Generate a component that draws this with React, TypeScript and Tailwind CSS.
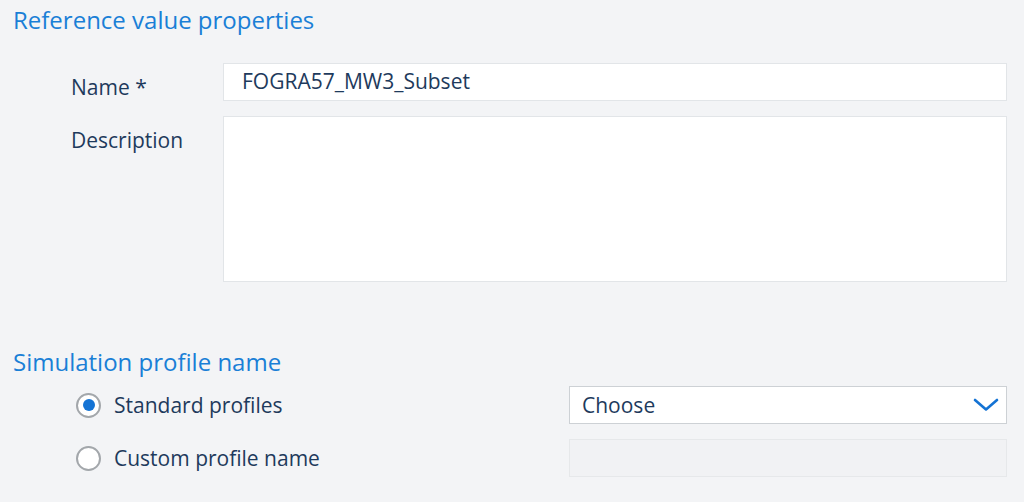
import React from 'react';

const labelColor = 'text-[#1e3a5c]';

function Radio({ checked }: { checked?: boolean }) {
  return (
    <span className="flex h-[25px] w-[25px] shrink-0 items-center justify-center rounded-full border-2 border-[#a3a7ab] bg-white">
      {checked && <span className="h-[12px] w-[12px] rounded-full bg-[#1473d4]" />}
    </span>
  );
}

export default function App() {
  return (
    <div
      className="h-[502px] w-full overflow-hidden bg-[#f3f4f6] pr-[17px]"
      style={{ fontFamily: '"Open Sans", "Noto Sans", sans-serif' }}
    >
      <h2 className="flex h-[40px] items-center pl-[13px] text-[24px] text-[#1a7fd6]">
        Reference value properties
      </h2>

      <div className="mt-[23px] grid grid-cols-[223px_1fr] gap-y-[15px]">
        <label className={`pl-[71px] pt-[12px] text-[21px] leading-[24px] ${labelColor}`}>Name *</label>
        <div className="flex h-[38px] items-center border border-[#e2e5e8] bg-white pl-[18px] text-[21px] text-[#1e3a5c]">
          FOGRA57_MW3_Subset
        </div>

        <label className={`pl-[71px] pt-[12px] text-[21px] leading-[24px] ${labelColor}`}>Description</label>
        <div className="h-[166px] border border-[#e2e5e8] bg-white" />
      </div>

      <h2 className="mt-[60px] flex h-[40px] items-center pl-[13px] text-[24px] text-[#1a7fd6]">
        Simulation profile name
      </h2>

      <div className="mt-[4px] flex flex-col gap-[15px]">
        <div className="flex items-center">
          <div className="flex w-[569px] items-center gap-[13px] pl-[76px]">
            <Radio checked />
            <span className={`text-[21px] leading-[24px] ${labelColor}`}>Standard profiles</span>
          </div>
          <div className="flex h-[38px] flex-1 items-center justify-between border border-[#cdd1d5] bg-white pl-[12px] pr-[7px]">
            <span className={`text-[21px] leading-[24px] ${labelColor}`}>Choose</span>
            <svg width="26" height="14" viewBox="0 0 26 14" fill="none">
              <path d="M2 2 L13 11.5 L24 2" stroke="#1473d4" strokeWidth="2.6" strokeLinecap="round" strokeLinejoin="round" />
            </svg>
          </div>
        </div>
        <div className="flex items-center">
          <div className="flex w-[569px] items-center gap-[13px] pl-[76px]">
            <Radio />
            <span className={`text-[21px] leading-[24px] ${labelColor}`}>Custom profile name</span>
          </div>
          <div className="h-[38px] flex-1 border border-[#e6e8ea] bg-[#f1f2f4]" />
        </div>
      </div>
    </div>
  );
}
